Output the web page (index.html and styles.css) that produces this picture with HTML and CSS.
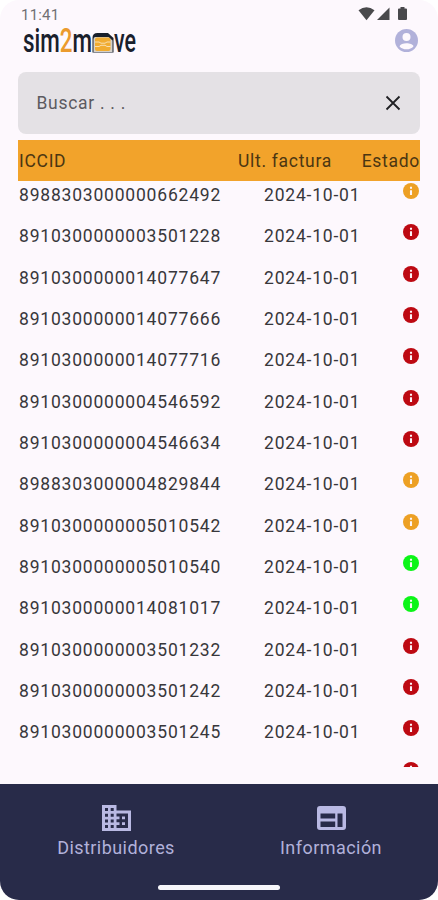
FILE: index.html
```
<!DOCTYPE html>
<html lang="es">
<head>
    <meta charset="UTF-8">
    <meta name="viewport" content="width=device-width, initial-scale=1.0">
    <title>sim2move</title>
    <link rel="stylesheet" href="styles.css">
</head>
<body>
    <svg class="sprite" width="0" height="0">
        <symbol id="info" viewBox="2 2 20 20">
            <circle cx="12" cy="12" r="10" fill="currentColor"/>
            <path d="M10.7 11h2.6v6h-2.6zM10.7 6.6h2.6v2.6h-2.6z" fill="#fdf5f8"/>
        </symbol>
    </svg>

    <div class="app">
        <div class="status-bar">
            <span class="clock">11:41</span>
            <svg class="status-icons" width="50" height="16" viewBox="0 0 50 16">
                <path d="M-.5 4.200Q7.500-1.500 15.500 4.200L7.500 14.200z"/>
                <path d="M30.500 1.500V14H18z"/>
                <path d="M41.500 1h4v1.500h1.500q1 0 1 1V13q0 1-1 1h-7q-1 0-1-1V3.500q0-1 1-1h1.500z"/>
            </svg>
        </div>

        <header class="top">
            <svg class="logo" width="118" height="42" viewBox="0 -6 118 42">
                <g class="logo-text">
                    <text x="0" y="26" textLength="69" lengthAdjust="spacingAndGlyphs">sim<tspan class="two">2</tspan>m</text>
                    <text x="91" y="26" textLength="22" lengthAdjust="spacingAndGlyphs">ve</text>
                </g>
                <!-- chip de la SIM -->
                <path d="M69.500 26.500V12q0-5 5-5h10.500L90.500 12v14.500z" fill="#19202c"/>
                <path d="M70.500 26V13q0-2 2-2h13l4 3.500V26z" fill="#d5d1cb"/>
                <rect x="72" y="11.500" width="15.500" height="13.500" rx="2" fill="#f1ac31"/>
                <path d="M72 16h4l2 1.200h4l2-1.200h3.500M72 20.500h4l2-1.200h4l2 1.200h3.500" fill="none" stroke="#f8dfb0" stroke-width="1"/>
            </svg>
            <svg class="avatar" width="23" height="23" viewBox="0 0 23 23">
                <circle cx="11.500" cy="11.500" r="11.500" fill="#b1b1da"/>
                <circle cx="11.500" cy="7.900" r="4" fill="#fdf8fd"/>
                <path d="M4.500 17.200c1.200-4 12.800-4 14 0-3 4.200-11 4.200-14 0z" fill="#fdf8fd"/>
            </svg>
        </header>

        <div class="search">
            <span>Buscar . . .</span>
            <svg width="16" height="16" viewBox="0 0 16 16">
                <path d="M1.500 1.500l13 13M14.500 1.500l-13 13" stroke="#202024" stroke-width="1.800"/>
            </svg>
        </div>

        <div class="table-head">
            <span class="col-id">ICCID</span>
            <span class="col-date">Ult. factura</span>
            <span class="col-state">Estado</span>
        </div>

        <div class="list" id="list"></div>

        <nav class="bottom-nav">
            <div class="tabs">
                <a class="tab">
                    <svg width="29" height="26" viewBox="0 0 29 26">
                        <path fill-rule="evenodd" d="M0 0h14.500v5.500H29V26H0zM3 3v3h3V3zM8.700 3v3h3V3zM3 8.700v3h3v-3zM8.700 8.700v3h3v-3zM3 14.400v3h3v-3zM8.700 14.400v3h3v-3zM3 20v3h3v-3zM8.700 20v3h3v-3zM14.500 8.500v3h3v2.800h-3v3h3v2.800h-3v3H26V8.500zM20 11.500h3v2.800h-3zM20 17.300h3v2.800h-3z"/>
                    </svg>
                    <span>Distribuidores</span>
                </a>
                <a class="tab">
                    <svg width="29" height="26" viewBox="0 0 29 26">
                        <path fill-rule="evenodd" d="M3 1h23q3 0 3 3v18q0 3-3 3H3q-3 0-3-3V4q0-3 3-3zM3.500 8.500v5h14.700v-5zM3.500 16.500V22h14.700v-5.500zM20.500 8.500V22h5V8.500z"/>
                    </svg>
                    <span>Información</span>
                </a>
            </div>
            <div class="home-bar"></div>
        </nav>
    </div>

    <script src="script.js"></script>
</body>
</html>
```
FILE: styles.css
```
* {
    box-sizing: border-box;
}
body {
    margin: 0;
    background: #fff;
    font-family: Roboto, "Liberation Sans", sans-serif;
    color: #38373b;
}
.sprite {
    display: block;
}
.app {
    display: flex;
    flex-direction: column;
    width: 438px;
    height: 900px;
    overflow: hidden;
    border-radius: 19px;
    background: #fdf8fd;
}
.status-bar {
    display: flex;
    justify-content: space-between;
    height: 26px;
    padding: 6px 29px 0 21px;
}
.clock {
    font-size: 15px;
    line-height: 18px;
    letter-spacing: 0.2px;
    color: #707073;
}
.status-icons {
    fill: #49494c;
    overflow: visible;
}
.top {
    display: flex;
    align-items: flex-start;
    justify-content: space-between;
    height: 46px;
    padding: 0 20px 0 23px;
}
.logo {
    margin-top: -6px;
    overflow: visible;
}
.logo-text {
    font-size: 34px;
    font-weight: 500;
    fill: #19202c;
}
.logo-text .two {
    fill: #eb9b2d;
}
.avatar {
    margin-top: 3px;
}
.search {
    display: flex;
    align-items: center;
    justify-content: space-between;
    height: 62px;
    margin: 0 18px;
    padding: 0 19px 0 18.500px;
    border-radius: 8px;
    background: #e4e1e5;
    font-size: 17.500px;
    letter-spacing: 0.7px;
    color: #5c5a60;
}
.table-head {
    display: flex;
    align-items: center;
    height: 41px;
    margin: 6px 18px 0;
    padding-left: 1px;
    background: #f2a32b;
    font-size: 17.500px;
    letter-spacing: 0.7px;
    color: #4b3612;
}
.table-head .col-id {
    width: 219px;
}
.table-head .col-state {
    margin-left: auto;
}
.list {
    height: 586px;
    margin: 0 18px;
    overflow: hidden;
}
.row {
    display: flex;
    height: 41.350px;
    padding: 3px 0 0 1px;
    font-size: 17.500px;
    line-height: 22px;
    letter-spacing: 0.8px;
}
.row .col-id {
    width: 245px;
}
.row .state {
    width: 16px;
    height: 16px;
    margin: -1px 1px 0 auto;
}
.warn {
    color: #eda024;
}
.error {
    color: #bd0912;
}
.ok {
    color: #0cf518;
}
.bottom-nav {
    display: flex;
    flex-direction: column;
    justify-content: space-between;
    align-items: center;
    height: 116px;
    margin-top: auto;
    padding: 21px 0 10px;
    background: #282b49;
    color: #b1b1da;
}
.tabs {
    display: flex;
    width: 430px;
    margin-left: 9px;
}
.tab {
    display: flex;
    flex: 1;
    flex-direction: column;
    align-items: center;
    font-size: 18px;
    line-height: 22px;
    letter-spacing: 0.45px;
}
.tab svg {
    margin-bottom: 6px;
    fill: #b9b9e3;
}
.home-bar {
    width: 122px;
    height: 5px;
    border-radius: 3px;
    background: #f6f6fa;
}
```
FILE: script.js
```
const sims = [
    ['8988303000000662492', 'warn'],
    ['8910300000003501228', 'error'],
    ['8910300000014077647', 'error'],
    ['8910300000014077666', 'error'],
    ['8910300000014077716', 'error'],
    ['8910300000004546592', 'error'],
    ['8910300000004546634', 'error'],
    ['8988303000004829844', 'warn'],
    ['8910300000005010542', 'warn'],
    ['8910300000005010540', 'ok'],
    ['8910300000014081017', 'ok'],
    ['8910300000003501232', 'error'],
    ['8910300000003501242', 'error'],
    ['8910300000003501245', 'error'],
    // la última fila queda cortada por la barra inferior
    ['', 'error']
];

document.getElementById('list').innerHTML = sims.map(([iccid, state]) => `
    <div class="row">
        <span class="col-id">${iccid}</span>
        <span class="col-date">${iccid ? '2024-10-01' : ''}</span>
        <svg class="state ${state}"><use href="#info"/></svg>
    </div>`).join('');
```
